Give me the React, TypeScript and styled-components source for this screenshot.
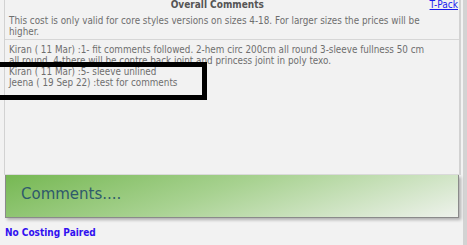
import React from "react";
import styled, { createGlobalStyle } from "styled-components";

const SANS = `"DejaVu Sans Condensed", "DejaVu Sans", "Liberation Sans", sans-serif`;

const GlobalStyle = createGlobalStyle`
  html, body {
    margin: 0;
    padding: 0;
    background: #f2f2f2;
  }
  body {
    font-family: ${SANS};
    font-stretch: condensed;
  }
`;

const Page = styled.div`
  display: flex;
  width: 467px;
  height: 245px;
  overflow: hidden;
  background: #f2f2f2;
`;

const Main = styled.div`
  position: relative;
  flex: 0 0 463px;
  padding-left: 4px;
  box-sizing: border-box;
`;

const Strip = styled.div`
  flex: 0 0 4px;
  background: #d3d3d3;
`;

const Panel = styled.div`
  width: 457px;
  box-sizing: border-box;
  background: #f2f2f2;
  border-left: 1px solid #d2d2d2;
  border-right: 2px solid #d2d2d2;
  border-bottom: 1px solid #dddddd;
`;

const HeaderRow = styled.div`
  display: flex;
  align-items: flex-start;
  height: 10px;
  line-height: 10px;
`;

const Title = styled.div`
  flex: 1;
  text-align: center;
  font-size: 10px;
  font-weight: bold;
  color: #555555;
`;

const TPack = styled.a`
  flex: 0 0 auto;
  font-size: 10px;
  color: #1a1aee;
  text-decoration: underline;
  margin-right: 1px;
`;

const Section = styled.div<{ $height?: number; $divider?: boolean; $top: number }>`
  padding: ${(p) => p.$top}px 4px 2px 4px;
  font-size: 9.8px;
  line-height: 11px;
  color: #6e6e6e;
  white-space: nowrap;
  overflow: hidden;
  box-sizing: border-box;
  ${(p) => (p.$height ? `height: ${p.$height}px;` : "")}
  ${(p) => (p.$divider ? "border-bottom: 1px solid #d6d6d6;" : "")}
`;

const Line = styled.div``;

const CommentsBar = styled.div`
  margin-left: 1px;
  width: 454px;
  height: 43px;
  box-sizing: border-box;
  padding: 10px 0 0 15px;
  border: 1px solid #8a8a8a;
  border-top: none;
  background: linear-gradient(162deg, #76b853 0%, #a8d291 45%, #eef2ec 100%);
  box-shadow: 2px 2px 3px rgba(0, 0, 0, 0.28);
  font-family: "DejaVu Sans", "Liberation Sans", sans-serif;
  font-stretch: normal;
  font-size: 15px;
  line-height: 18px;
  color: #2f5a6b;
`;

const NoCosting = styled.div`
  margin: 9px 0 0 1px;
  font-size: 10px;
  line-height: 12px;
  font-weight: bold;
  color: #3110f0;
`;

const Highlight = styled.div`
  position: absolute;
  left: -5px;
  top: 62px;
  width: 212px;
  height: 38px;
  box-sizing: border-box;
  border: 5px solid #000;
  pointer-events: none;
`;

export default function App() {
  return (
    <>
      <GlobalStyle />
      <Page>
        <Main>
          <Panel>
            <HeaderRow>
              <Title>Overall Comments</Title>
              <TPack href="#">T-Pack</TPack>
            </HeaderRow>
            <Section $top={5} $divider>
              <Line>
                This cost is only valid for core styles versions on sizes 4-18. For larger sizes the prices will be
              </Line>
              <Line>higher.</Line>
            </Section>
            <Section $top={4} $height={134}>
              <Line>
                Kiran ( 11 Mar) :1- fit comments followed. 2-hem circ 200cm all round 3-sleeve fullness 50 cm
              </Line>
              <Line>all round. 4-there will be contre back joint and princess joint in poly texo.</Line>
              <Line>Kiran ( 11 Mar) :5- sleeve unlined</Line>
              <Line>Jeena ( 19 Sep 22) :test for comments</Line>
            </Section>
          </Panel>
          <CommentsBar>Comments....</CommentsBar>
          <NoCosting>No Costing Paired</NoCosting>
          <Highlight />
        </Main>
        <Strip />
      </Page>
    </>
  );
}
